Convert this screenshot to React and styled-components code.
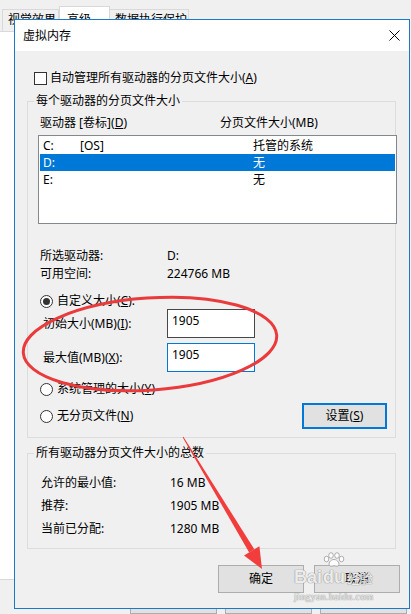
import React from "react";
import styled, { createGlobalStyle } from "styled-components";

const GlobalStyle = createGlobalStyle`
  html, body {
    margin: 0;
    padding: 0;
    background: #f0f0f0;
  }
  body {
    font-family: "Noto Sans", "Noto Sans CJK SC", sans-serif;
    font-size: 12px;
    line-height: 16px;
    color: #000;
  }
  * {
    box-sizing: border-box;
  }
`;

const Screen = styled.div`
  position: relative;
  width: 411px;
  height: 614px;
  overflow: hidden;
  background: #f0f0f0;
`;

/* the properties window behind the dialog */
const BackWindow = styled.div`
  display: flex;
  flex-direction: column;
  height: 100%;
`;

const TabStrip = styled.div`
  display: flex;
  align-items: flex-end;
  height: 32px;
  padding-left: 3px;
`;

const Tab = styled.div`
  width: ${props => props.width}px;
  height: ${props => (props.active ? 25 : 22)}px;
  padding: ${props => (props.active ? "5px 0 0 7px" : "2px 0 0 5px")};
  background: ${props => (props.active ? "#fff" : "#f0f0f0")};
  border: 1px solid #d9d9d9;
  border-bottom: none;
  margin-left: ${props => (props.active ? "0" : "-1px")};
  white-space: nowrap;
  overflow: hidden;
`;

const TabPanel = styled.div`
  height: 570px;
  width: 405px;
  margin-left: -1px;
  background: #fff;
  border: 1px solid #d9d9d9;
`;

const BackButtons = styled.div`
  display: flex;
  gap: 8px;
  padding-left: 130px;
  margin-top: 11px;
`;

const BackButton = styled.div`
  width: 87px;
  height: 23px;
  background: #e1e1e1;
  border: 1px solid #adadad;
`;

/* the dialog */
const Dialog = styled.div`
  position: absolute;
  left: 14px;
  top: 19px;
  width: 396px;
  height: 590px;
  border: 1px solid #1979ca;
  background: #f0f0f0;
  display: flex;
  flex-direction: column;
`;

const TitleBar = styled.div`
  height: 31px;
  flex: none;
  background: #fff;
  display: flex;
  align-items: center;
  justify-content: space-between;
  padding: 0 9px 0 8px;
`;

const Body = styled.div`
  display: flex;
  flex-direction: column;
  padding: 19px 9px 15px 12px;
`;

const CheckRow = styled.label`
  display: flex;
  align-items: center;
  gap: 3px;
  padding-left: 7px;
  height: 16px;
`;

const CheckBox = styled.span`
  width: 13px;
  height: 13px;
  border: 1px solid #333;
  background: #fff;
`;

const Group = styled.div`
  position: relative;
  width: 369px;
  margin-top: 15px;
  border: 1px solid #dcdcdc;
  padding: ${props => props.pad};
`;

const GroupTitle = styled.span`
  position: absolute;
  top: -9px;
  left: 6px;
  padding: 0 2px;
  background: #f0f0f0;
  white-space: nowrap;
`;

const ListHeader = styled.div`
  display: grid;
  grid-template-columns: 180px 1fr;
  padding-left: 2px;
  height: 16px;
`;

const ListBox = styled.div`
  width: 359px;
  height: 89px;
  margin-top: 4px;
  border: 1px solid #828790;
  background: #fff;
  padding: 1px;
`;

const ListRow = styled.div`
  display: grid;
  grid-template-columns: 37px 173px 1fr;
  height: 17px;
  line-height: 17px;
  padding-left: 3px;
  background: ${props => (props.selected ? "#0078d7" : "transparent")};
  color: ${props => (props.selected ? "#fff" : "#000")};
`;

const InfoGrid = styled.div`
  display: grid;
  grid-template-columns: ${props => props.label}px 1fr;
  row-gap: ${props => props.gap}px;
  margin-top: ${props => props.top}px;
  padding-left: ${props => props.indent}px;
`;

const RadioRow = styled.div`
  display: flex;
  align-items: center;
  gap: 4px;
  height: 16px;
  padding-left: 2px;
  margin-top: ${props => props.top}px;
`;

const Radio = styled.span`
  width: 13px;
  height: 13px;
  border-radius: 50%;
  border: 1px solid #333;
  background: #fff;
  display: flex;
  align-items: center;
  justify-content: center;

  &::after {
    content: "";
    width: 7px;
    height: 7px;
    border-radius: 50%;
    background: ${props => (props.checked ? "#333" : "transparent")};
  }
`;

const SizeRow = styled.div`
  display: grid;
  grid-template-columns: 124px 88px;
  align-items: center;
  padding-left: 5px;
  margin-top: ${props => props.top}px;
`;

const SizeInput = styled.div`
  height: 29px;
  border: 1px solid ${props => (props.focused ? "#0078d7" : "#474747")};
  background: #fff;
  padding: 3px 0 0 4px;
`;

const LastRow = styled.div`
  display: flex;
  align-items: center;
  justify-content: space-between;
  margin-top: 6px;
  height: 26px;
  padding-right: 8px;

  ${RadioRow} {
    margin-top: 0;
  }
`;

const Button = styled.div`
  width: ${props => props.width}px;
  height: ${props => props.height}px;
  display: flex;
  align-items: center;
  justify-content: center;
  background: #e1e1e1;
  border: ${props => (props.primary ? "2px solid #0078d7" : "1px solid #adadad")};
`;

const Footer = styled.div`
  display: flex;
  justify-content: flex-end;
  gap: 10px;
  margin-top: 16px;
`;

/* Baidu jingyan watermark lying over the buttons */
const Watermark = styled.div`
  position: absolute;
  left: 294px;
  top: 553px;
  display: flex;
  flex-direction: column;
  align-items: flex-start;
  white-space: nowrap;
  color: rgba(255, 255, 255, 0.85);
  text-shadow: 0 0 1px #8a8a8a, 0 0 1px #8a8a8a;
  pointer-events: none;
`;

const MarkLogo = styled.div`
  display: flex;
  align-items: flex-end;
  height: 34px;
  font-family: "Liberation Sans", sans-serif;
  font-weight: bold;
  font-size: 18px;
  line-height: 20px;
`;

const MarkDu = styled.span`
  display: flex;
  flex-direction: column;
  align-items: center;
  margin-left: 1px;
`;

const MarkWord = styled.span`
  font-family: "Noto Sans CJK SC", sans-serif;
  font-size: 13px;
  line-height: 18px;
  font-weight: normal;
  margin-left: 2px;
`;

const MarkUrl = styled.div`
  font-family: "Liberation Serif", serif;
  font-size: 10px;
  line-height: 12px;
  margin-top: 4px;
  letter-spacing: 0.3px;
`;

const Overlay = styled.svg`
  position: absolute;
  left: 0;
  top: 0;
  pointer-events: none;
`;

const CloseIcon = () => (
  <svg width="11" height="11" viewBox="0 0 11 11">
    <path d="M0.5 0.5 L10.5 10.5 M10.5 0.5 L0.5 10.5" stroke="#000" strokeWidth="1" />
  </svg>
);

const PawIcon = () => (
  <svg width="22" height="15" viewBox="0 0 22 15">
    <g fill="rgba(255,255,255,0.85)" stroke="#9a9a9a" strokeWidth="0.8">
      <ellipse cx="3.5" cy="7" rx="2.3" ry="2.8" />
      <ellipse cx="8" cy="3.5" rx="2.3" ry="2.8" />
      <ellipse cx="14" cy="3.5" rx="2.3" ry="2.8" />
      <ellipse cx="18.5" cy="7" rx="2.3" ry="2.8" />
      <path d="M11 7.5 C7 7.5 5 12 6.5 13.6 C8 15 9.5 13.8 11 13.8 C12.5 13.8 14 15 15.5 13.6 C17 12 15 7.5 11 7.5 Z" />
    </g>
  </svg>
);

const drives = [
  { name: "C:", label: "[OS]", size: "托管的系统" },
  { name: "D:", label: "", size: "无", selected: true },
  { name: "E:", label: "", size: "无" },
];

export default function App() {
  return (
    <Screen>
      <GlobalStyle />
      <BackWindow>
        <TabStrip>
          <Tab width={57}>视觉效果</Tab>
          <Tab width={51} active>高级</Tab>
          <Tab width={80}>数据执行保护</Tab>
        </TabStrip>
        <TabPanel />
        <BackButtons>
          <BackButton />
          <BackButton />
          <BackButton />
        </BackButtons>
      </BackWindow>

      <Dialog>
        <TitleBar>
          <span>虚拟内存</span>
          <CloseIcon />
        </TitleBar>
        <Body>
          <CheckRow>
            <CheckBox />
            <span>自动管理所有驱动器的分页文件大小(<u>A</u>)</span>
          </CheckRow>

          <Group pad="13px 0 8px 10px">
            <GroupTitle>每个驱动器的分页文件大小</GroupTitle>
            <ListHeader>
              <span>驱动器 [卷标](<u>D</u>)</span>
              <span>分页文件大小(MB)</span>
            </ListHeader>
            <ListBox>
              {drives.map(d => (
                <ListRow key={d.name} selected={d.selected}>
                  <span>{d.name}</span>
                  <span>{d.label}</span>
                  <span>{d.size}</span>
                </ListRow>
              ))}
            </ListBox>

            <InfoGrid label={127} gap={2} top={24} indent={2}>
              <span>所选驱动器:</span>
              <span>D:</span>
              <span>可用空间:</span>
              <span>224766 MB</span>
            </InfoGrid>

            <RadioRow top={11}>
              <Radio checked />
              <span>自定义大小(<u>C</u>):</span>
            </RadioRow>
            <SizeRow top={0}>
              <span>初始大小(MB)(<u>I</u>):</span>
              <SizeInput>1905</SizeInput>
            </SizeRow>
            <SizeRow top={5}>
              <span>最大值(MB)(<u>X</u>):</span>
              <SizeInput focused>1905</SizeInput>
            </SizeRow>
            <RadioRow top={9}>
              <Radio />
              <span>系统管理的大小(<u>Y</u>)</span>
            </RadioRow>
            <LastRow>
              <RadioRow>
                <Radio />
                <span>无分页文件(<u>N</u>)</span>
              </RadioRow>
              <Button primary width={85} height={26}>
                设置(<u>S</u>)
              </Button>
            </LastRow>
          </Group>

          <Group pad="21px 0 11px 13px">
            <GroupTitle>所有驱动器分页文件大小的总数</GroupTitle>
            <InfoGrid label={129} gap={7} top={0} indent={0}>
              <span>允许的最小值:</span>
              <span>16 MB</span>
              <span>推荐:</span>
              <span>1905 MB</span>
              <span>当前已分配:</span>
              <span>1280 MB</span>
            </InfoGrid>
          </Group>

          <Footer>
            <Button width={86} height={28}>确定</Button>
            <Button width={86} height={28}>取消</Button>
          </Footer>
        </Body>
      </Dialog>

      <Watermark>
        <MarkLogo>
          <span>Bai</span>
          <MarkDu>
            <PawIcon />
            <span>du</span>
          </MarkDu>
          <MarkWord>经验</MarkWord>
        </MarkLogo>
        <MarkUrl>jingyan.baidu.com</MarkUrl>
      </Watermark>

      <Overlay width="411" height="614" viewBox="0 0 411 614">
        <ellipse
          cx="150"
          cy="344"
          rx="127"
          ry="46"
          transform="rotate(-4 150 344)"
          fill="none"
          stroke="#ea3a3c"
          strokeWidth="3"
        />
        <polygon
          points="182.6,437.3 183.4,436.7 254.3,549.3 249.2,552.5"
          fill="#f23d3d"
        />
        <polygon points="262,569 244,555.5 259.4,546.3" fill="#f23d3d" />
      </Overlay>
    </Screen>
  );
}
